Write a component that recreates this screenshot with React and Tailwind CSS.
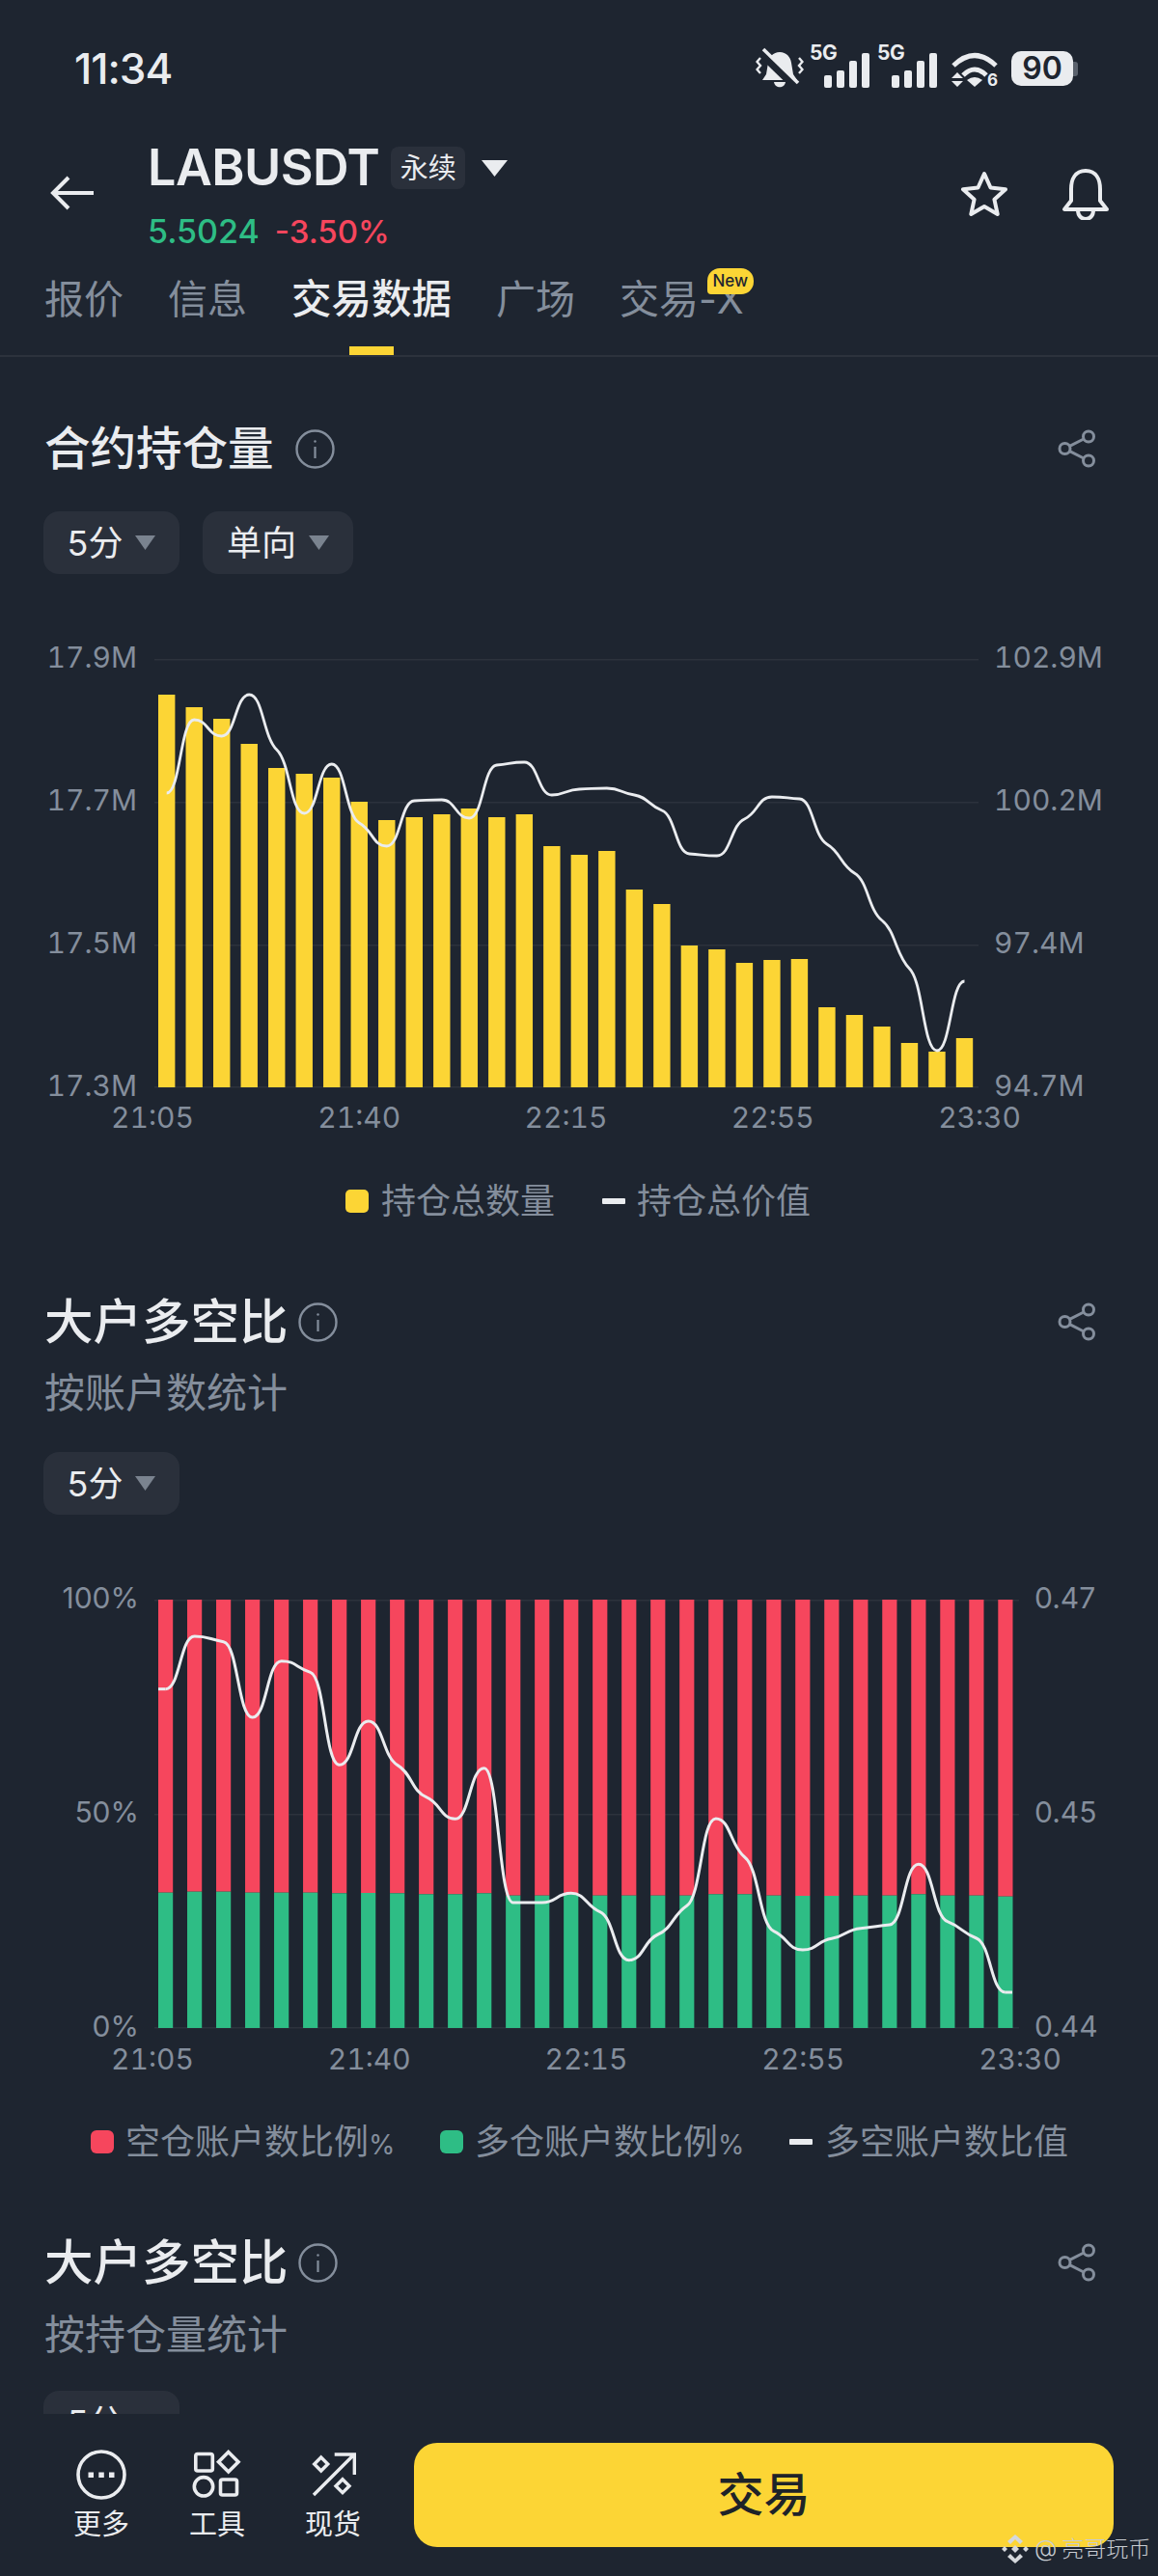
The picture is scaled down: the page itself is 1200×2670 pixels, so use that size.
import React from 'react';

// y positions read off the screenshot, absolute page pixels
const oiBars = [720, 733, 745, 771, 796, 802, 806, 831, 850, 847, 844, 838, 847, 844, 877, 886, 882, 922, 937, 980, 984, 998, 995, 994, 1044, 1052, 1064, 1081, 1090, 1076];
const oiLine = [822, 746, 763, 720, 777, 843, 792, 853, 877, 830, 829, 848, 793, 790, 824, 818, 817, 824, 840, 885, 887, 849, 826, 828, 875, 905, 954, 1004, 1089, 1017];
const lsGreen = [1025, 1022, 1022, 1025, 1025, 1025, 1027, 1026, 1027, 1030, 1030, 1027, 1034, 1034, 1030, 1034, 1034, 1034, 1034, 1030, 1030, 1034, 1035, 1035, 1034, 1034, 1030, 1034, 1034, 1037];
const lsLine = [392, 228, 245, 480, 305, 340, 628, 492, 628, 728, 796, 638, 1056, 1056, 1027, 1085, 1235, 1155, 1066, 795, 915, 1145, 1203, 1168, 1136, 1125, 937, 1115, 1167, 1335];

// monotone cubic through the points, flattened tangents give the little shelves
const monotonePath = (pts) => {
    const n = pts.length;
    const slopes = [];
    for (let i = 0; i < n - 1; i++) {
        slopes.push((pts[i + 1][1] - pts[i][1]) / (pts[i + 1][0] - pts[i][0]));
    }
    const tan = pts.map((_, i) => {
        if (i === 0 || i === n - 1) return 0;
        if (slopes[i - 1] * slopes[i] <= 0) return 0;
        return (0.9 * slopes[i - 1] * slopes[i]) / (slopes[i - 1] + slopes[i]);
    });
    let d = `M${pts[0][0]} ${pts[0][1]}`;
    for (let i = 0; i < n - 1; i++) {
        const h = (pts[i + 1][0] - pts[i][0]) / 2;
        d += `C${pts[i][0] + h} ${pts[i][1] + tan[i] * h} ${pts[i + 1][0] - h} ${pts[i + 1][1] - tan[i + 1] * h} ${pts[i + 1][0]} ${pts[i + 1][1]}`;
    }
    return d;
};

const OpenInterestPlot = () => (
    <svg width="854" height="444" className="block overflow-visible">
        {[0, 148, 296, 443].map(y => <rect key={y} x="0" y={y} width="854" height="1.5" fill="#2c323c" />)}
        {oiBars.map((top, i) => (
            <rect key={i} x={4 + 28.51 * i} y={top - 683} width="17.4" height={1127 - top} fill="#fcd535" />
        ))}
        <path d={monotonePath(oiLine.map((y, i) => [12.7 + 28.51 * i, y - 683]))} fill="none" stroke="#eaecef" strokeWidth="2.8" />
    </svg>
);

const LongShortPlot = () => {
    const first = lsLine[0] / 3 - 38;
    const last = lsLine[lsLine.length - 1] / 3 - 38;
    const curve = monotonePath(lsLine.map((z, i) => [11.6 + 30.01 * i, z / 3 - 38]));
    return (
        <svg width="896" height="444" className="block overflow-visible">
            {[0, 222, 443].map(y => <rect key={y} x="0" y={y} width="896" height="1.5" fill="#2c323c" />)}
            {lsGreen.map((z, i) => {
                const split = z / 3 - 38;
                return (
                    <g key={i}>
                        <rect x={4 + 30.01 * i} y="0" width="15.2" height={split} fill="#f6465d" />
                        <rect x={4 + 30.01 * i} y={split} width="15.2" height={444 - split} fill="#2ebd85" />
                    </g>
                );
            })}
            {/* the line runs flat to the outer edge of the first and last bar */}
            <path d={`M4 ${first}H11.6`} fill="none" stroke="#eaecef" strokeWidth="3" />
            <path d={curve} fill="none" stroke="#eaecef" strokeWidth="3" />
            <path d={`M881.900 ${last}H889`} fill="none" stroke="#eaecef" strokeWidth="3" />
        </svg>
    );
};

const InfoIcon = ({ size = 41 }) => (
    <svg width={size} height={size} viewBox="0 0 41 41" fill="none" stroke="#848e9c">
        <circle cx="20.5" cy="20.5" r="19" strokeWidth="2.4" />
        <path d="M20.5 18v12" strokeWidth="2.2" />
        <circle cx="20.5" cy="12.5" r="1.2" fill="#848e9c" stroke="none" />
    </svg>
);

const ShareIcon = () => (
    <svg width="40" height="40" viewBox="0 0 40 40" fill="none" stroke="#848e9c" strokeWidth="3">
        <circle cx="7.5" cy="20" r="5.5" />
        <circle cx="32" cy="7.5" r="5.5" />
        <circle cx="32" cy="32.5" r="5.5" />
        <path d="M12.5 17.4 27 10M12.5 22.6 27 30" />
    </svg>
);

const Chip = ({ label, width }) => (
    <div className={`h-[65px] rounded-[16px] bg-[#2a303b] flex items-center justify-center gap-[13px] text-[36px] leading-none text-[#eaecef] ${width}`}>
        <span>{label}</span>
        <svg width="21" height="15" viewBox="0 0 21 15"><path d="M0 0h21L10.5 15z" fill="#7a838f" /></svg>
    </div>
);

const Title = ({ text, size, gap }) => (
    <div className="h-[60px] flex items-center justify-between">
        <div className={`flex items-center ${gap}`}>
            <span className={`text-[#eaecef] font-medium leading-none ${size}`}>{text}</span>
            <InfoIcon />
        </div>
        <div className="mr-[18px]"><ShareIcon /></div>
    </div>
);

const AxisCol = ({ labels, className }) => (
    <div className={`mt-[-2px] h-[484px] flex flex-col justify-between text-[30px] leading-[40px] text-[#848e9c] ${className}`}>
        {labels.map(l => <span key={l}>{l}</span>)}
    </div>
);

const TimeAxis = ({ className }) => (
    <div className={`h-[40px] ml-[69px] flex justify-between text-[30px] leading-[40px] tabular-nums text-[#848e9c] ${className}`}>
        <span>21:05</span><span>21:40</span><span>22:15</span><span>22:55</span><span>23:30</span>
    </div>
);

const SignalBars = () => (
    <div className="relative w-[62px] h-[40px]">
        <span className="absolute left-0 top-[-7px] text-[21px] leading-[22px] font-bold tracking-[-0.5px] text-[#eaecef]">5G</span>
        <div className="absolute right-0 bottom-0 flex items-end gap-[5px]">
            <div className="w-[8px] h-[13px] rounded-[2px] bg-[#eaecef]" />
            <div className="w-[8px] h-[18px] rounded-[2px] bg-[#eaecef]" />
            <div className="w-[8px] h-[28px] rounded-[2px] bg-[#eaecef]" />
            <div className="w-[8px] h-[36px] rounded-[2px] bg-[#eaecef]" />
        </div>
    </div>
);

const BottomItem = ({ label, children }) => (
    <div className="w-[120px] flex flex-col items-center">
        <div className="h-[52px] flex items-center justify-center">{children}</div>
        <span className="mt-[10px] text-[29px] leading-[32px] text-[#eaecef]">{label}</span>
    </div>
);

const App = () => {
    return (
        <div className="w-[1200px] h-[2670px] relative overflow-hidden flex flex-col bg-[#1e2530] font-['Inter','Noto_Sans_CJK_SC',sans-serif]" lang="zh-CN">
            {/* status bar */}
            <div className="h-[142px] shrink-0 flex items-center justify-between pl-[77px] pr-[83px]">
                <span className="text-[44px] leading-none font-medium text-[#eaecef] tracking-[-1px]">11:34</span>
                <div className="flex items-center">
                    <svg width="50" height="44" viewBox="0 0 50 44" fill="none" stroke="#eaecef" strokeWidth="3.6">
                        <path d="M25 5c7 0 11 5 12 11l2 12 4 6H7l4-6 2-12C14 10 18 5 25 5z" fill="#eaecef" stroke="none" />
                        <path d="M4 4l36 35" stroke="#1e2530" strokeWidth="9" />
                        <path d="M8 2l36 35" />
                        <path d="M19 36h12c-1 7-11 7-12 0z" fill="#eaecef" stroke="none" />
                        <path d="M5 11 1.500 15 5 19 1.500 23 5 27M45 11l3.500 4-3.500 4 3.500 4-3.500 4" strokeWidth="2.4" />
                    </svg>
                    <div className="ml-[6px]"><SignalBars /></div>
                    <div className="ml-[8px]"><SignalBars /></div>
                    <svg width="50" height="37" viewBox="0 0 50 37" fill="none" stroke="#eaecef" strokeWidth="5" className="ml-[14px] overflow-visible">
                        <path d="M3 15Q25-6 47 15" />
                        <path d="M13 25Q25 13 37 25" />
                        <path d="M17 30Q25 24 33 30L25 37z" fill="#eaecef" stroke="none" />
                        <path d="M1 28 7 22l6 6zM1 31h12L7 37z" fill="#eaecef" stroke="none" />
                        <text x="38" y="36" fontSize="17" fontWeight="700" fill="#eaecef" stroke="none">6</text>
                    </svg>
                    <div className="ml-[13px] flex items-center">
                        <div className="w-[64px] h-[36px] rounded-[10px] bg-[#eaecef] flex items-center justify-center text-[32px] leading-none font-semibold text-[#1e2530]">90</div>
                        <div className="w-[5px] h-[15px] rounded-r-[3px] bg-[#5b626d]" />
                    </div>
                </div>
            </div>

            {/* header */}
            <div className="mt-[10px] h-[108px] shrink-0 flex items-center justify-between pl-[52px] pr-[50px]">
                <div className="flex items-center">
                    <svg width="46" height="36" viewBox="0 0 46 36" fill="none" stroke="#eaecef" strokeWidth="4" className="mt-[-12px]">
                        <path d="M45 18H3M19 2 3 18l16 16" />
                    </svg>
                    <div className="ml-[55px] flex flex-col">
                        <div className="h-[44px] flex items-center">
                            <span className="text-[52px] leading-none font-semibold text-[#eaecef] tracking-[-0.5px]">LABUSDT</span>
                            <span className="ml-[12px] w-[77px] h-[44px] rounded-[8px] bg-[#2a303b] flex items-center justify-center text-[29px] leading-none text-[#eaecef]">永续</span>
                            <svg width="27" height="17" viewBox="0 0 27 17" className="ml-[17px]"><path d="M0 0h27L13.5 17z" fill="#eaecef" /></svg>
                        </div>
                        <div className="mt-[24px] h-[40px] flex items-center gap-[16px] leading-none font-medium">
                            <span className="text-[34px] text-[#2ebd85]">5.5024</span>
                            <span className="text-[33px] text-[#f6465d]">-3.50%</span>
                        </div>
                    </div>
                </div>
                <div className="flex items-center gap-[55px] mb-[10px]">
                    <svg width="50" height="48" viewBox="0 0 50 48" fill="none" stroke="#eaecef" strokeWidth="4" strokeLinejoin="round">
                        <path d="M25 3l6.500 14.500 15.500 1.700-11.600 10.500 3.300 15.300L25 37l-13.700 8 3.300-15.300L3 19.200l15.500-1.700z" />
                    </svg>
                    <svg width="50" height="54" viewBox="0 0 50 54" fill="none" stroke="#eaecef" strokeWidth="4" strokeLinejoin="round">
                        <path d="M25 3C14 3 10 12 10 22v12l-7 9h44l-7-9V22C40 12 36 3 25 3z" />
                        <path d="M17 44c0 12 16 12 16 0" />
                    </svg>
                </div>
            </div>

            {/* tabs */}
            <div className="mt-[22px] h-[86px] shrink-0 flex items-start gap-[46px] pl-[46px] text-[41px] leading-[56px] text-[#848e9c]">
                <span>报价</span>
                <span>信息</span>
                <div className="flex flex-col items-center">
                    <span className="font-medium text-[#eaecef] text-[41.500px]">交易数据</span>
                    <div className="mt-[21px] w-[46px] h-[9px] bg-[#fcd535]" />
                </div>
                <span>广场</span>
                <div className="relative">
                    <span>交易-X</span>
                    <span className="absolute right-[-10px] top-[-4px] w-[48px] h-[27px] rounded-t-[13px] rounded-br-[13px] rounded-bl-[4px] bg-[#fcd535] flex items-center justify-center text-[17px] leading-none font-medium text-[#1e2530]">New</span>
                </div>
            </div>
            <div className="h-[2px] shrink-0 bg-[#2c323c]" />

            {/* scroll content */}
            <div className="flex-1 min-h-0 overflow-hidden pl-[46px] pr-[46px]">
                <div className="mt-[65px]"><Title text="合约持仓量" size="text-[47.500px]" gap="gap-[22px]" /></div>
                <div className="mt-[35px] ml-[-1px] flex gap-[24px]">
                    <Chip label="5分" width="w-[141px]" />
                    <Chip label="单向" width="w-[156px]" />
                </div>
                <div className="mt-[68px] flex">
                    <AxisCol labels={['17.9M', '17.7M', '17.5M', '17.3M']} className="w-[96px] items-end tabular-nums" />
                    <div className="ml-[18px] mt-[20px]"><OpenInterestPlot /></div>
                    <AxisCol labels={['102.9M', '100.2M', '97.4M', '94.7M']} className="ml-[16px] items-start tabular-nums" />
                </div>
                <TimeAxis className="mt-[-7px] w-[943px]" />
                <div className="mt-[47px] h-[40px] flex items-center justify-center pr-[2px] text-[36px] leading-none text-[#848e9c]">
                    <div className="w-[24px] h-[24px] rounded-[5px] bg-[#fcd535]" />
                    <span className="ml-[13px]">持仓总数量</span>
                    <div className="ml-[49px] w-[24px] h-[6px] rounded-[1px] bg-[#eaecef]" />
                    <span className="ml-[12px]">持仓总价值</span>
                </div>

                <div className="mt-[75px]"><Title text="大户多空比" size="text-[50.500px]" gap="gap-[10px]" /></div>
                <div className="mt-[19px] h-[50px] flex items-center text-[42px] leading-none text-[#848e9c]">按账户数统计</div>
                <div className="mt-[36px] ml-[-1px] flex"><Chip label="5分" width="w-[141px]" /></div>
                <div className="mt-[68px] flex">
                    <AxisCol labels={['100%', '50%', '0%']} className="w-[98px] items-end" />
                    <div className="ml-[16px] mt-[20px]"><LongShortPlot /></div>
                    <AxisCol labels={['0.47', '0.45', '0.44']} className="ml-[16px] items-start" />
                </div>
                <TimeAxis className="mt-[-6px] w-[985px]" />
                <div className="mt-[46px] h-[40px] flex items-center pl-[48px] text-[36px] leading-none text-[#848e9c] whitespace-nowrap">
                    <div className="w-[24px] h-[24px] rounded-[6px] bg-[#f6465d]" />
                    <span className="ml-[12px] w-[278px]">空仓账户数比例<span className="text-[28px]">%</span></span>
                    <div className="ml-[48px] w-[24px] h-[24px] rounded-[6px] bg-[#2ebd85]" />
                    <span className="ml-[12px] w-[278px]">多仓账户数比例<span className="text-[28px]">%</span></span>
                    <div className="ml-[48px] w-[24px] h-[6px] rounded-[1px] bg-[#eaecef]" />
                    <span className="ml-[13px]">多空账户数比值</span>
                </div>

                <div className="mt-[75px]"><Title text="大户多空比" size="text-[50.500px]" gap="gap-[10px]" /></div>
                <div className="mt-[20px] h-[50px] flex items-center text-[42px] leading-none text-[#848e9c]">按持仓量统计</div>
                <div className="mt-[33px] ml-[-1px] flex"><Chip label="5分" width="w-[141px]" /></div>
            </div>

            {/* bottom bar */}
            <div className="h-[168px] shrink-0 flex items-start pt-[30px] pl-[45px] pr-[46px]">
                <div className="mt-[7px] flex w-[360px]">
                    <BottomItem label="更多">
                        <svg width="52" height="52" viewBox="0 0 52 52" fill="none" stroke="#eaecef" strokeWidth="3.6">
                            <circle cx="26" cy="26" r="24" />
                            <path d="M12.500 23.500h5.500v5.500h-5.500zM23.300 23.500h5.500v5.500h-5.500zM34 23.500h5.500v5.500H34z" fill="#eaecef" stroke="none" />
                        </svg>
                    </BottomItem>
                    <BottomItem label="工具">
                        <svg width="52" height="52" viewBox="0 0 52 52" fill="none" stroke="#eaecef" strokeWidth="3.6">
                            <rect x="3.800" y="4.500" width="17.500" height="17.500" rx="2" />
                            <path d="M37.700 2.500 48 12.700 37.700 23 27.500 12.700z" />
                            <circle cx="12" cy="38.300" r="9.700" />
                            <rect x="29.500" y="31" width="17" height="16" rx="2" />
                        </svg>
                    </BottomItem>
                    <BottomItem label="现货">
                        <svg width="50" height="50" viewBox="0 0 50 50" fill="none" stroke="#eaecef" strokeWidth="3.4">
                            <path d="M5 46 46 5M26.700 4h20.600v21" />
                            <path d="M12.700 7l7 7-7 7-7-7z" />
                            <path d="M35 29.700l7 7-7 7-7-7z" />
                        </svg>
                    </BottomItem>
                </div>
                <div className="ml-[24px] flex-1 h-[108px] rounded-[24px] bg-[#fcd535] flex items-center justify-center text-[48px] leading-none font-medium text-[#1e2329]">交易</div>
            </div>

            {/* watermark */}
            <div className="absolute left-[1038px] top-[2627px] flex items-center text-[#c8ccd2] text-[23px] leading-none font-light">
                <svg width="28" height="30" viewBox="0 0 28 30" fill="#d5d8dc">
                    <path d="M14 0l8 7-3 3-5-5-5 5-3-3zM14 30l8-7-3-3-5 5-5-5-3 3zM3 12l3 3-3 3-3-3zM25 12l3 3-3 3-3-3zM14 11l4 4-4 4-4-4z" />
                </svg>
                <span className="ml-[6px] text-[24px]">@</span>
                <span className="ml-[5px]">亮哥玩币</span>
            </div>
        </div>
    );
};

export default App;
